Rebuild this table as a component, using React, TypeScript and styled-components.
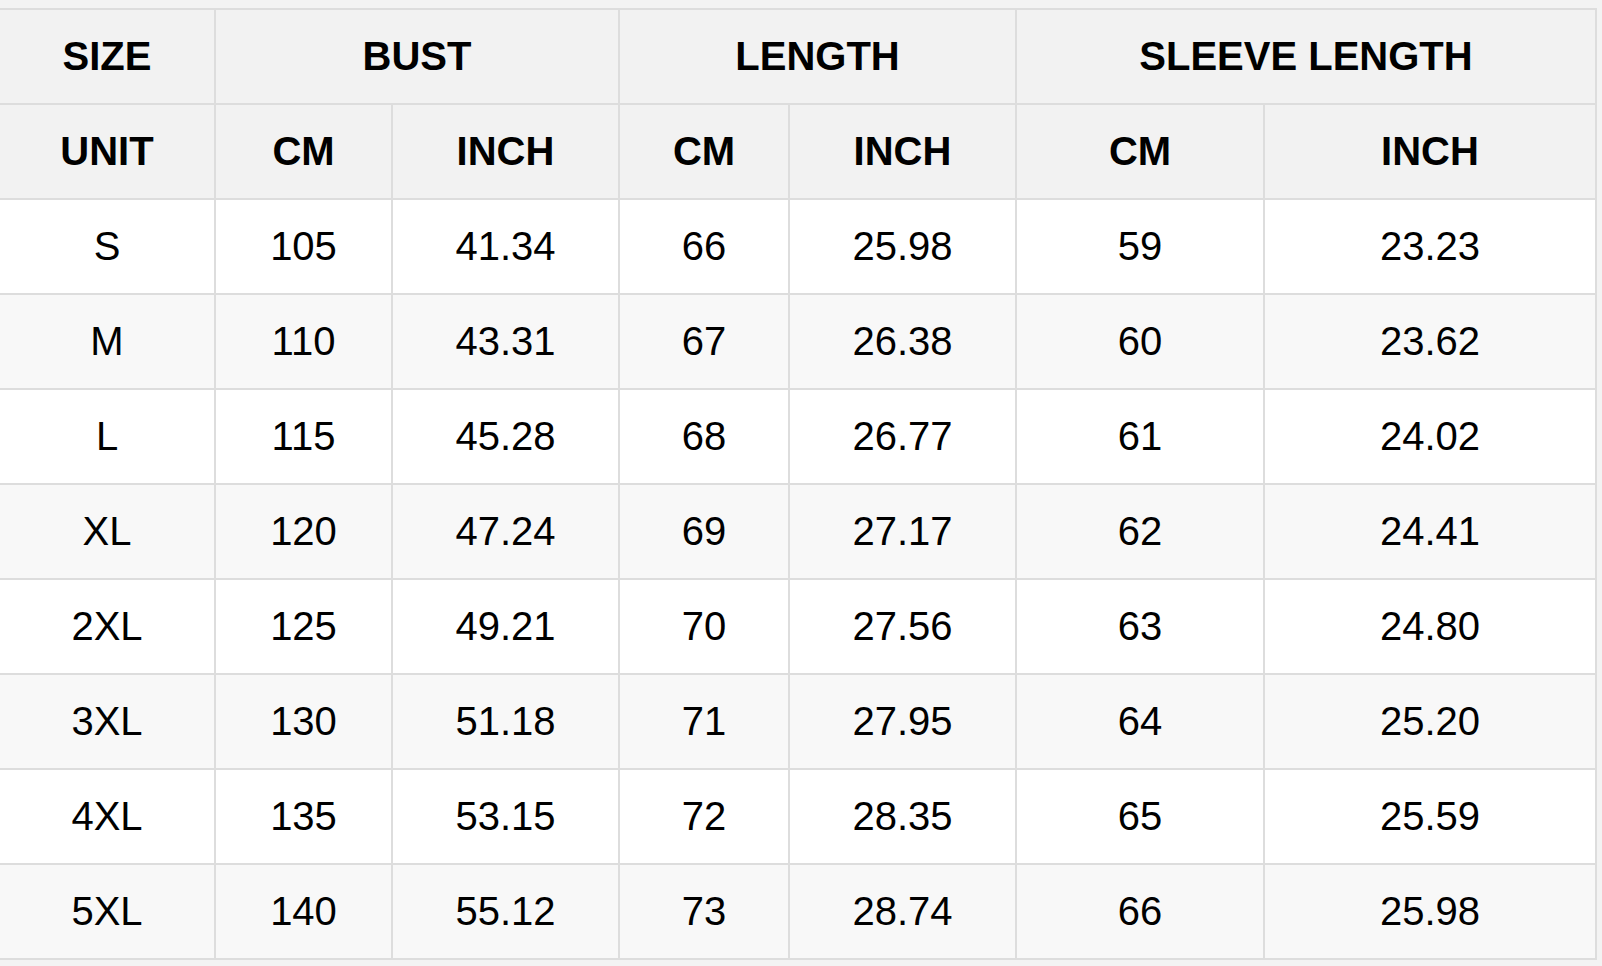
import styled, { createGlobalStyle } from "styled-components";

const rows: string[][] = [
  ["S", "105", "41.34", "66", "25.98", "59", "23.23"],
  ["M", "110", "43.31", "67", "26.38", "60", "23.62"],
  ["L", "115", "45.28", "68", "26.77", "61", "24.02"],
  ["XL", "120", "47.24", "69", "27.17", "62", "24.41"],
  ["2XL", "125", "49.21", "70", "27.56", "63", "24.80"],
  ["3XL", "130", "51.18", "71", "27.95", "64", "25.20"],
  ["4XL", "135", "53.15", "72", "28.35", "65", "25.59"],
  ["5XL", "140", "55.12", "73", "28.74", "66", "25.98"],
];

const units = ["UNIT", "CM", "INCH", "CM", "INCH", "CM", "INCH"];

function App() {
  return (
    <>
      <GlobalStyle />
      <Page>
        <Grid>
          <HeadCell>SIZE</HeadCell>
          <HeadCell span={2}>BUST</HeadCell>
          <HeadCell span={2}>LENGTH</HeadCell>
          <HeadCell span={2}>SLEEVE LENGTH</HeadCell>
          {units.map((u, i) => (
            <HeadCell key={"u" + i}>{u}</HeadCell>
          ))}
          {rows.map((row, r) =>
            row.map((v, c) => (
              <Cell key={r + "-" + c} striped={r % 2 === 1}>
                {v}
              </Cell>
            ))
          )}
        </Grid>
      </Page>
    </>
  );
}

export default App;

const GlobalStyle = createGlobalStyle`
  html, body {
    margin: 0;
    padding: 0;
    background: #f3f3f3;
    overflow: hidden;
  }
`;

const Page = styled.div`
  width: 1602px;
  height: 966px;
  padding-top: 8px;
  box-sizing: border-box;
  font-family: "Liberation Sans", Arial, Helvetica, sans-serif;
`;

const Grid = styled.div`
  display: grid;
  grid-template-columns: 214px 175px 225px 168px 225px 246px 330px;
  grid-auto-rows: 93px;
  gap: 2px;
  padding: 2px;
  margin-left: -2px;
  width: max-content;
  background: #dddddd;
`;

const HeadCell = styled.div<{ span?: number }>`
  grid-column: span ${(p) => p.span ?? 1};
  display: flex;
  align-items: center;
  justify-content: center;
  background: #f2f2f2;
  color: #000;
  font-size: 40px;
  font-weight: 700;
`;

const Cell = styled.div<{ striped: boolean }>`
  display: flex;
  align-items: center;
  justify-content: center;
  background: ${(p) => (p.striped ? "#f8f8f8" : "#ffffff")};
  color: #000;
  font-size: 40px;
  font-weight: 400;
`;
